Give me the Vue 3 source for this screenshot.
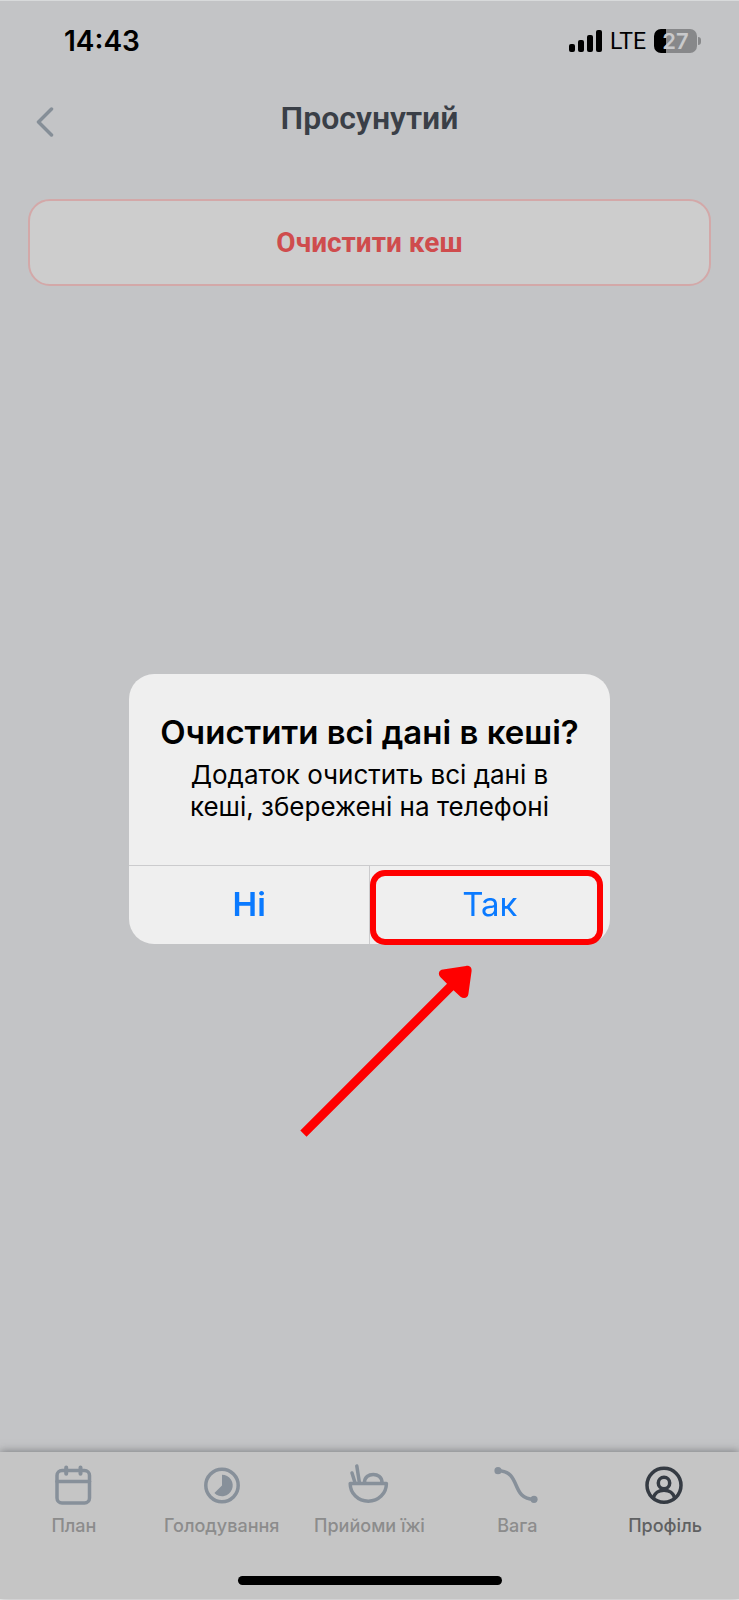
<template>
  <div class="screen">
    <header class="status-bar">
      <time class="clock">14:43</time>
      <div class="indicators">
        <svg class="signal" viewBox="0 0 33 22" aria-hidden="true">
          <rect x="0" y="14" width="6" height="8" rx="2" />
          <rect x="9" y="10" width="6" height="12" rx="2" />
          <rect x="18" y="5" width="6" height="17" rx="2" />
          <rect x="27" y="0" width="6" height="22" rx="2" />
        </svg>
        <span class="network">LTE</span>
        <div class="battery">
          <span class="battery-body">{{ battery }}</span>
          <span class="battery-tip"></span>
        </div>
      </div>
    </header>

    <div class="nav-bar">
      <button class="back" type="button" aria-label="Назад">
        <svg viewBox="0 0 18 30" aria-hidden="true">
          <path d="M15.500 2 L2.500 15 L15.500 28" />
        </svg>
      </button>
      <h1 class="page-title">Просунутий</h1>
    </div>

    <main class="content">
      <button class="clear-cache" type="button" @click="dialogOpen = true">Очистити кеш</button>
    </main>

    <footer class="tab-bar">
      <nav class="tabs">
        <a
          v-for="tab in tabs"
          :key="tab.id"
          href="#"
          class="tab"
          :class="{ active: tab.id === activeTab }"
          @click.prevent="activeTab = tab.id"
        >
          <svg v-if="tab.id === 'plan'" class="tab-icon" viewBox="0 0 44 44" aria-hidden="true">
            <rect x="5" y="6.500" width="32.500" height="32.500" rx="5" />
            <path d="M5 17.500 H37.500" />
            <path d="M14.200 3.500 V9.800 M28.500 3.500 V9.800" stroke-width="4" />
          </svg>
          <svg v-else-if="tab.id === 'fasting'" class="tab-icon" viewBox="0 0 44 44" aria-hidden="true">
            <circle cx="22" cy="21.500" r="16.200" />
            <path class="solid" d="M22 10.800 A10.700 10.700 0 1 1 14.400 29 L22 21.500 Z" />
          </svg>
          <svg v-else-if="tab.id === 'meals'" class="tab-icon" viewBox="0 0 44 44" aria-hidden="true">
            <path d="M3.200 19.500 H39.400 C39.400 29.500 31.500 37.200 21.300 37.200 C11 37.200 3.200 29.500 3.200 19.500 Z" />
            <path d="M17.500 18.500 C17.500 7.700 35 7.700 35 18.500" />
            <path d="M5 9 L7.800 18 M9.800 2 L12.300 18" />
          </svg>
          <svg v-else-if="tab.id === 'weight'" class="tab-icon" viewBox="0 0 44 44" aria-hidden="true">
            <path d="M3 6.700 C27 6.700 15 35.300 39 35.300" />
            <circle class="solid" cx="3" cy="6.700" r="3.600" />
            <circle class="solid" cx="39" cy="35.300" r="3.600" />
          </svg>
          <svg v-else class="tab-icon" viewBox="0 0 44 44" aria-hidden="true">
            <circle cx="21" cy="21.300" r="17" />
            <circle cx="21" cy="19" r="5.700" />
            <path d="M10.500 34 C12.500 23.500 29.500 23.500 31.500 34" />
          </svg>
          <span>{{ tab.label }}</span>
        </a>
      </nav>
      <div class="home-indicator"></div>
    </footer>

    <div v-if="dialogOpen" class="overlay">
      <div class="dialog" role="alertdialog" aria-labelledby="dialog-title" aria-describedby="dialog-text">
        <div class="dialog-body">
          <h2 id="dialog-title">Очистити всі дані в кеші?</h2>
          <p id="dialog-text">Додаток очистить всі дані в<br />кеші, збережені на телефоні</p>
        </div>
        <div class="dialog-actions">
          <button class="action no" type="button" @click="dialogOpen = false">Ні</button>
          <button class="action yes" type="button" @click="dialogOpen = false">Так</button>
        </div>
        <svg class="arrow" viewBox="0 0 175 175" aria-hidden="true">
          <path
            d="M0.300 165.500 L147 18.700 L140.500 12.200 C137.500 9.200 138.800 4.800 143 4.400 L166 0.900 C169.500 0.500 172 2.500 171.600 6 L168.400 29 C168 33.200 163.500 34.200 160.500 31.700 L153.500 25.200 L6.500 171.700 Z"
          />
        </svg>
      </div>
    </div>
  </div>
</template>

<script setup>
import { ref } from 'vue'

const battery = ref(27)
const dialogOpen = ref(true)
const activeTab = ref('profile')

const tabs = [
  { id: 'plan', label: 'План' },
  { id: 'fasting', label: 'Голодування' },
  { id: 'meals', label: 'Прийоми їжі' },
  { id: 'weight', label: 'Вага' },
  { id: 'profile', label: 'Профіль' },
]
</script>

<style>
body {
  margin: 0;
  background: #c3c4c6;
}
</style>

<style scoped>
* {
  box-sizing: border-box;
}

.screen {
  display: flex;
  flex-direction: column;
  min-height: 100vh;
  border-top: 1px solid #d8dadb;
  border-bottom: 1px solid #f4f4f4;
  background: #c3c4c6;
  color: #000;
  font-family: Inter, "Liberation Sans", sans-serif;
}

button {
  padding: 0;
  border: 0;
  background: none;
  font: inherit;
  cursor: pointer;
}

.status-bar {
  display: flex;
  align-items: center;
  justify-content: space-between;
  height: 80px;
  padding: 0 38px 0 64px;
}

.clock {
  font-size: 28px;
  font-weight: 600;
}

.indicators {
  display: flex;
  align-items: center;
  gap: 8px;
}

.signal {
  width: 33px;
  height: 22px;
}

.network {
  font-family: Roboto, "Noto Sans", sans-serif;
  font-size: 23px;
}

.battery {
  display: flex;
  align-items: center;
  gap: 1px;
}

.battery-body {
  width: 43px;
  height: 24px;
  border-radius: 7px;
  background: linear-gradient(90deg, #000 27%, #87888a 27%);
  color: #c8c9cb;
  font-size: 22px;
  font-weight: 600;
  line-height: 24px;
  text-align: center;
}

.battery-tip {
  width: 3px;
  height: 8px;
  border-radius: 0 3px 3px 0;
  background: #87888a;
}

.nav-bar {
  display: grid;
  grid-template-columns: 48px 1fr 48px;
  align-items: center;
  height: 78px;
  padding: 0 24px;
}

.back {
  display: flex;
  justify-content: center;
  align-items: center;
  width: 42px;
  height: 48px;
  padding-top: 4px;
}

.back svg {
  width: 18px;
  height: 30px;
  fill: none;
  stroke: #858e97;
  stroke-width: 3.5;
  stroke-linecap: round;
  stroke-linejoin: round;
}

.page-title {
  margin: 0;
  padding-bottom: 4px;
  color: #3a3f47;
  font-family: Roboto, "Noto Sans", sans-serif;
  font-size: 32px;
  font-weight: 600;
  line-height: 40px;
  text-align: center;
}

.content {
  flex: 1;
  padding: 40px 28px;
}

.clear-cache {
  width: 100%;
  height: 87px;
  border: 2px solid #d3a8a8;
  border-radius: 22px;
  background: #cdcdcd;
  color: #cf4c4d;
  font-family: Roboto, "Noto Sans", sans-serif;
  font-size: 28px;
  font-weight: 700;
}

.tab-bar {
  padding: 12px 0 14px;
  background: #c5c5c5;
  box-shadow: 0 -1px 8px rgba(60, 62, 66, 0.5);
}

.tabs {
  display: flex;
}

.tab {
  display: flex;
  flex: 1;
  flex-direction: column;
  align-items: center;
  gap: 5px;
  color: #8c8c8c;
  font-size: 18px;
  font-weight: 500;
  line-height: 26px;
  text-decoration: none;
  white-space: nowrap;
}

.tab-icon {
  width: 44px;
  height: 44px;
  overflow: visible;
  fill: none;
  stroke: #87909a;
  stroke-width: 3.5;
  stroke-linecap: round;
  stroke-linejoin: round;
}

.tab-icon .solid {
  fill: #87909a;
  stroke: none;
}

.tab.active {
  color: #606162;
}

.tab.active .tab-icon {
  stroke: #353b43;
}

.home-indicator {
  width: 264px;
  height: 9px;
  margin: 37px auto 0;
  border-radius: 5px;
  background: #000;
}

.overlay {
  position: fixed;
  inset: 0;
  display: flex;
  align-items: center;
  justify-content: center;
  padding-top: 18px;
}

.dialog {
  position: relative;
  width: 65%;
  border-radius: 25px;
  background: #efefef;
}

.dialog-body {
  padding: 37px 16px 42px;
  text-align: center;
}

.dialog-body h2 {
  margin: 0 0 6px;
  font-size: 33px;
  font-weight: 600;
  line-height: 42px;
  white-space: nowrap;
}

.dialog-body p {
  margin: 0;
  font-size: 26px;
  line-height: 32px;
  white-space: nowrap;
}

.dialog-actions {
  display: flex;
  border-top: 1px solid #cbcbcd;
}

.action {
  position: relative;
  flex: 1;
  height: 78px;
  padding-bottom: 2px;
  color: #0a7aff;
  font-size: 33px;
}

.action.no {
  border-right: 1px solid #cbcbcd;
  font-weight: 600;
}

.action.yes::after {
  content: "";
  position: absolute;
  inset: 4px 7px -1px 0;
  border: 6px solid #ff0000;
  border-radius: 15px;
}

.arrow {
  position: absolute;
  top: 291px;
  left: 171px;
  width: 175px;
  height: 175px;
  fill: #ff0000;
  pointer-events: none;
}
</style>
